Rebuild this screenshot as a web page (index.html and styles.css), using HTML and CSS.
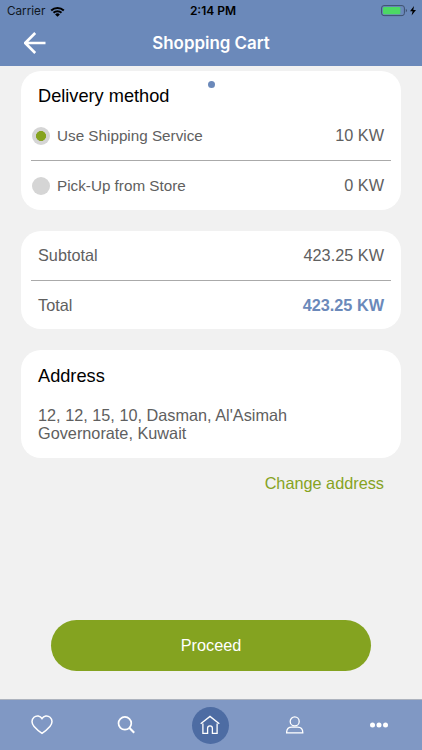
FILE: index.html
```html
<!DOCTYPE html>
<html lang="en">
<head>
<meta charset="utf-8">
<title>Shopping Cart</title>
<link rel="stylesheet" href="styles.css">
</head>
<body>
<div class="app">
  <header class="header">
    <div class="status">
      <div class="carrier"><span>Carrier</span>
        <svg width="15" height="11" viewBox="0 0 15 11"><path d="M.5 3.8A10 10 0 0 1 14.5 3.8L13.1 5.2A8 8 0 0 0 1.9 5.2ZM2.8 6.1A6.7 6.7 0 0 1 12.2 6.1L10.8 7.5A4.7 4.7 0 0 0 4.2 7.5ZM5.1 8.4A3.4 3.4 0 0 1 9.9 8.4L7.5 10.8Z"/></svg>
      </div>
      <span class="time">2:14 PM</span>
      <div class="power">
        <svg width="36" height="12" viewBox="0 0 36 12"><rect x=".6" y=".6" width="22.8" height="10" rx="2.4" fill="none" stroke="#3e516f"/><rect x="2" y="2" width="17.3" height="7.3" rx="1.2" fill="#4cd964"/><path d="M24.8 4v3.2q1.2-.4 1.2-1.6t-1.2-1.6Z" fill="#3e516f"/><path d="M33 .9 29 6.3h2.6l-1 4.3L35 4.9h-2.7Z"/></svg>
      </div>
    </div>
    <div class="titlebar">
      <svg class="back" width="24" height="22" viewBox="0 0 24 22"><path d="M11.2 1 1.2 11l10 10M1.6 11H21.5"/></svg>
      <h1>Shopping Cart</h1>
    </div>
  </header>
  <main class="content">
    <section class="card delivery">
      <i class="page-dot"></i>
      <h2>Delivery method</h2>
      <div class="row option divided"><i class="radio selected"></i><span>Use Shipping Service</span><b>10 KW</b></div>
      <div class="row option"><i class="radio"></i><span>Pick-Up from Store</span><b>0 KW</b></div>
    </section>
    <section class="card totals">
      <div class="row divided"><span>Subtotal</span><b>423.25 KW</b></div>
      <div class="row"><span>Total</span><b class="total">423.25 KW</b></div>
    </section>
    <section class="card address">
      <h2>Address</h2>
      <p>12, 12, 15, 10, Dasman, Al'Asimah Governorate, Kuwait</p>
    </section>
    <a class="change">Change address</a>
    <button class="proceed">Proceed</button>
  </main>
  <nav class="tabs">
    <a><svg width="22" height="20" viewBox="0 0 22 20"><path stroke-width="1.5" d="M11 3.5C9.2.6 5.4.2 3 2.3.2 4.7.5 8.6 3.1 11.5 5.2 13.9 8.3 16.6 11 18.4c2.7-1.8 5.8-4.5 7.9-6.9C21.5 8.6 21.8 4.7 19 2.3 16.6.2 12.8.6 11 3.5Z"/></svg></a>
    <a><svg width="18" height="18" viewBox="0 0 18 18"><circle cx="7.9" cy="7.3" r="6.4" stroke-width="1.7"/><path stroke-width="2.1" d="m12.3 11.8 4.9 4.9"/></svg></a>
    <a><span class="home"><svg width="20" height="20" viewBox="0 0 20 20"><path d="M.7 8.8 10 1.4l9.3 7.4M2.9 8.6v9.7h4.7v-5.1q0-2.3 2.4-2.3t2.4 2.3v5.1h4.7V8.6"/></svg></span></a>
    <a><svg width="18" height="18" viewBox="0 0 18 18"><circle cx="8.7" cy="5.4" r="4.5"/><path d="M.6 16.8c0-3.9 2.1-5.6 5.2-5.6h5.8c3.1 0 5.2 1.7 5.2 5.6Z"/></svg></a>
    <a><svg class="more" width="18" height="6" viewBox="0 0 18 6"><circle cx="2.5" cy="3" r="2.5"/><circle cx="9" cy="3" r="2.5"/><circle cx="15.5" cy="3" r="2.5"/></svg></a>
  </nav>
</div>
</body>
</html>
```
FILE: styles.css
```css
* { box-sizing: border-box; }
body { margin: 0; }
svg { display: block; }
h1, h2, p { margin: 0; font-weight: 400; }

.app {
  width: 422px;
  height: 750px;
  display: flex;
  flex-direction: column;
  background: #f1f1f1;
  color: #606060;
  font: 16.27px/18px "Liberation Sans", Arial, sans-serif;
}

.header { height: 66px; background: #6b89ba; color: #000; font-family: Inter, sans-serif; }
.status {
  height: 22px;
  padding: 0 5px 0 7px;
  display: grid;
  grid-template-columns: 1fr auto 1fr;
  align-items: center;
  font-size: 11.7px;
}
.carrier { display: flex; align-items: center; gap: 5px; color: #101722; }
.time { font-weight: 600; font-size: 12px; margin-left: 2px; }
.power { justify-self: end; }
.titlebar {
  height: 41px;
  padding: 0 24px;
  display: grid;
  grid-template-columns: 24px 1fr 24px;
  align-items: center;
}
.titlebar h1 { color: #fff; font-size: 16.9px; font-weight: 600; line-height: 22px; text-align: center; }
.back { fill: none; stroke: #fff; stroke-width: 2.6; }

.content { flex: 1; padding: 5px 21px 28px; display: flex; flex-direction: column; }
.card { position: relative; background: #fff; border-radius: 20px; padding: 0 10px; margin-bottom: 21px; }
.card h2 { padding-left: 7px; color: #000; font-size: 18.2px; line-height: 20px; }
.page-dot { position: absolute; left: 186.5px; top: 9.5px; width: 7px; height: 7px; border-radius: 50%; background: #6b89ba; }
.delivery { height: 139px; padding-top: 15px; }
.delivery h2 { margin-bottom: 5px; }
.row { height: 49px; padding: 0 7px 2px; display: flex; align-items: center; justify-content: space-between; }
.row b { font-weight: 400; }
.divided { height: 50px; border-bottom: 1px solid #aaa; }
.option { padding-left: 2px; }
.option span { flex: 1; font-size: 15.25px; padding-top: 2px; }
.radio { width: 18px; height: 18px; margin: 2px 7px 0 -1px; border-radius: 50%; background: #d5d5d5; }
.selected { background: radial-gradient(circle, #86a31f 4.7px, #d5d5d5 5.3px); }
.totals { height: 98px; }
.row .total { color: #6b89ba; font-weight: 700; }
.address { height: 108px; padding-top: 16px; margin-bottom: 16px; }
.address p { padding: 20px 7px 0; width: 290px; }
.change { align-self: flex-end; margin-right: 17px; color: #86a31f; }
.proceed {
  width: 320px;
  height: 51px;
  margin: auto auto 0 30px;
  padding: 0 0 2px;
  border: 0;
  border-radius: 26px;
  background: #84a320;
  color: #fff;
  font: inherit;
}

.tabs {
  height: 51px;
  border-top: 1px solid #adb3be;
  background: #8098c4;
  display: grid;
  grid-template-columns: repeat(5, 84.2px);
}
.tabs a { display: flex; align-items: center; justify-content: center; }
.tabs svg { fill: none; stroke: #fff; stroke-width: 1.3; }
.tabs .more { fill: #fff; stroke: none; }
.home { width: 37px; height: 37px; border-radius: 50%; background: #4d6ca3; display: flex; align-items: center; justify-content: center; }
```
